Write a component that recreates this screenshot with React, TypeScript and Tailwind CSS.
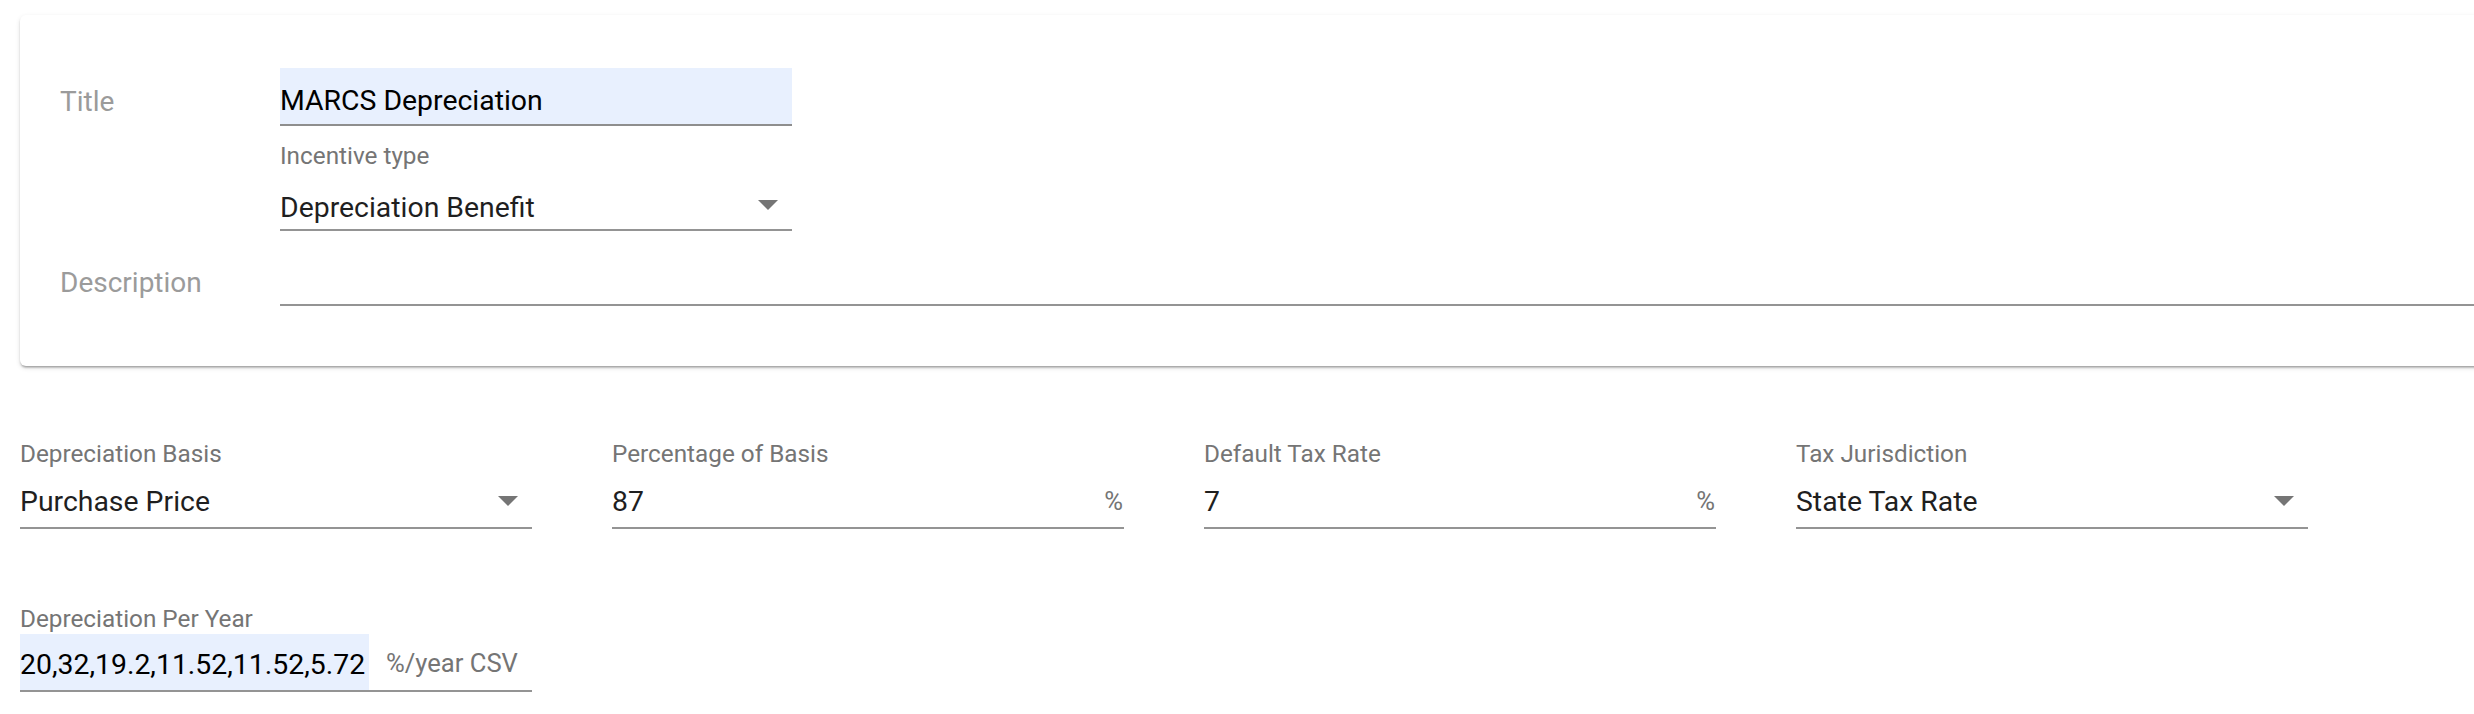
import React from 'react';

// MUI-ish form, rendered at a large zoom level
const labelCls = "text-[24.3px] leading-[24px] text-[#757575] whitespace-nowrap";
const valueCls = "text-[28.4px] leading-[32px] text-[#1f1f1f] whitespace-nowrap";
const adornCls = "text-[25.6px] leading-[30px] text-[#757575] whitespace-nowrap";
const sideLabelCls = "text-[28px] leading-[32px] text-[#9b9b9b] whitespace-nowrap";

function Arrow() {
  return (
    <svg width="20" height="10" viewBox="0 0 20 10" className="shrink-0 block">
      <path d="M0 0h20L10 10z" fill="#757575" />
    </svg>
  );
}

function SelectField({ label, value }: { label: string; value: string }) {
  return (
    <div className="w-[512px]">
      <div className={labelCls}>{label}</div>
      <div className="h-[63px] border-b-2 border-[#949494] pt-[20px] flex items-start justify-between">
        <span className={valueCls}>{value}</span>
        <span className="mt-[10px] mr-[14px]"><Arrow /></span>
      </div>
    </div>
  );
}

function PercentField({ label, value }: { label: string; value: string }) {
  return (
    <div className="w-[512px]">
      <div className={labelCls}>{label}</div>
      <div className="h-[63px] border-b-2 border-[#949494] pt-[20px] flex items-start justify-between">
        <span className={valueCls}>{value}</span>
        <span className={adornCls + " mt-[0px] mr-[1px]"}>%</span>
      </div>
    </div>
  );
}

export default function App() {
  return (
    <div className="w-full overflow-hidden bg-white font-['Roboto',sans-serif] pb-[40px]">
      <div className="pl-[20px] pt-[15px]">
        {/* header card */}
        <div className="w-[2600px] bg-white rounded-[6px] shadow-[0_3px_2px_-2px_rgba(0,0,0,0.2),0_2px_2px_0_rgba(0,0,0,0.14),0_2px_5px_0_rgba(0,0,0,0.12)] pl-[40px] pt-[53px] pb-[60px]">
          <div className="flex">
            <div className={"w-[220px] shrink-0 pt-[18px] " + sideLabelCls}>Title</div>
            <div className="w-[512px] h-[58px] bg-[#e8f0fe] border-b-2 border-[#8e8e8e] pt-[17px]">
              <span className="text-[28.4px] leading-[32px] text-black whitespace-nowrap">MARCS Depreciation</span>
            </div>
          </div>
          <div className="flex">
            <div className="w-[220px] shrink-0" />
            <div className="w-[512px] pt-[18px]">
              <div className={labelCls}>Incentive type</div>
              <div className="h-[63px] border-b-2 border-[#949494] pt-[24px] flex items-start justify-between">
                <span className={valueCls}>Depreciation Benefit</span>
                <span className="mt-[8px] mr-[14px]"><Arrow /></span>
              </div>
            </div>
          </div>
          <div className="flex">
            <div className={"w-[220px] shrink-0 pt-[36px] " + sideLabelCls}>Description</div>
            <div className="flex-1 h-[75px] border-b-2 border-[#949494]" />
          </div>
        </div>

        {/* depreciation settings */}
        <div className="mt-[76px] flex gap-[80px]">
          <SelectField label="Depreciation Basis" value="Purchase Price" />
          <PercentField label="Percentage of Basis" value="87" />
          <PercentField label="Default Tax Rate" value="7" />
          <SelectField label="Tax Jurisdiction" value="State Tax Rate" />
        </div>

        <div className="mt-[78px] w-[512px]">
          <div className={labelCls}>Depreciation Per Year</div>
          <div className="mt-[3px] h-[58px] border-b-2 border-[#949494] flex">
            <div className="w-[349px] bg-[#e8f0fe] pt-[15px]">
              <span className="text-[28.4px] leading-[32px] text-black whitespace-nowrap">20,32,19.2,11.52,11.52,5.72</span>
            </div>
            <span className={adornCls + " ml-[17px] pt-[14px]"}>%/year CSV</span>
          </div>
        </div>
      </div>
    </div>
  );
}
